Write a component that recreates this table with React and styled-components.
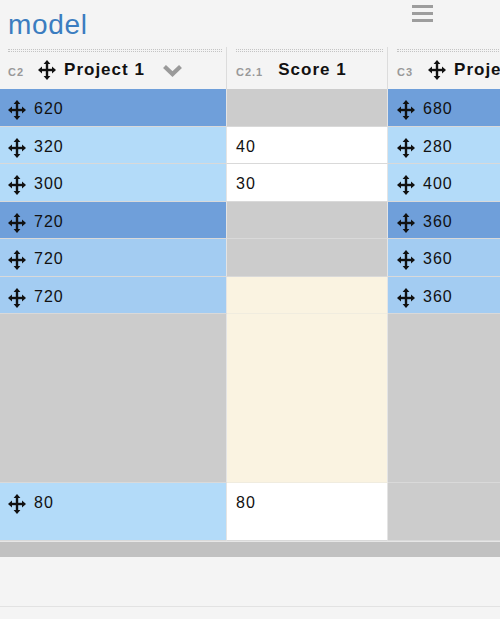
import React from "react";
import styled, { createGlobalStyle } from "styled-components";

const GlobalStyle = createGlobalStyle`
  html, body {
    margin: 0;
    padding: 0;
    background: #f4f4f4;
  }
  body {
    font-family: "Liberation Sans", Arial, sans-serif;
    color: #111;
  }
`;

const Page = styled.div`
  width: 500px;
  height: 619px;
  overflow: hidden;
  display: flex;
  flex-direction: column;
`;

const TitleBar = styled.div`
  height: 47px;
  display: flex;
  align-items: flex-start;
  justify-content: space-between;
`;

const Title = styled.div`
  padding: 7px 0 0 8px;
  font-size: 28px;
  line-height: 36px;
  letter-spacing: 0.7px;
  color: #3b7dc0;
`;

const Burger = styled.div`
  margin: 5px 67px 0 0;
  width: 21px;
  display: flex;
  flex-direction: column;
  gap: 4px;

  span {
    height: 3px;
    background: #9d9d9d;
  }
`;

const Grid = styled.div`
  display: flex;
  flex-direction: column;
  width: 560px;
`;

const Row = styled.div`
  display: flex;
  height: ${(p) => p.h}px;
`;

const widths = [227, 161, 172];

const HeadCell = styled.div`
  width: ${(p) => p.w}px;
  flex: none;
  box-sizing: border-box;
  padding: 2px 4px 0 ${(p) => p.pl}px;
  border-right: 1px solid #dcdcdc;
  display: flex;
  flex-direction: column;
`;

const Grip = styled.div`
  height: 3px;
  border-top: 1px dotted #c4c4c4;
  border-bottom: 1px dotted #c4c4c4;
  box-sizing: border-box;
`;

const HeadLabel = styled.div`
  height: 30px;
  margin-top: 3px;
  display: flex;
  align-items: center;
  white-space: nowrap;
`;

const ColId = styled.span`
  font-size: 11px;
  font-weight: bold;
  letter-spacing: 1px;
  color: #999;
  margin-right: ${(p) => p.gap}px;
  padding-top: 3px;
`;

const ColName = styled.span`
  font-size: 17px;
  font-weight: bold;
  letter-spacing: 1px;
  color: #111;
`;

const MoveSlot = styled.span`
  display: flex;
  margin-right: 8px;
`;

const Chevron = styled.svg`
  margin-left: 17px;
  flex: none;
`;

const tones = {
  dark: "#6f9fda",
  light: "#b3dbf9",
  mid: "#a3ccf2",
  gray: "#cccccc",
  cream: "#faf3e1",
  white: "#ffffff",
};

const Cell = styled.div`
  width: ${(p) => p.w}px;
  flex: none;
  box-sizing: border-box;
  background: ${(p) => tones[p.tone]};
  border-right: 1px solid #e4e4e4;
  border-bottom: 1px solid ${(p) => (p.tone === "cream" ? "#f0ecdf" : "#d9d9d9")};
  padding: 11px 0 0 ${(p) => p.pl}px;
  display: flex;
  align-items: flex-start;
  gap: 8px;
  font-size: 16px;
  line-height: 18px;
  letter-spacing: 1px;
`;

const Scrollbar = styled.div`
  height: 16px;
  box-sizing: border-box;
  border-top: 1px solid #e6e6e6;
  background: #c1c1c1;
`;

const Footer = styled.div`
  height: 49px;
  border-bottom: 1px solid #e2e2e2;
  background: #f4f4f4;
`;

const MoveIcon = () => (
  <svg width="18" height="20" viewBox="0 0 18 20" style={{ flex: "none" }}>
    <rect x="7.8" y="3" width="2.4" height="14" fill="#111" />
    <rect x="3" y="8.8" width="12" height="2.4" fill="#111" />
    <polygon points="9,0 5.6,4 12.4,4" fill="#111" />
    <polygon points="9,20 5.6,16 12.4,16" fill="#111" />
    <polygon points="0,10 4,6.6 4,13.4" fill="#111" />
    <polygon points="18,10 14,6.6 14,13.4" fill="#111" />
  </svg>
);

const pads = [8, 9, 9];

const rows = [
  { h: 38, cells: [["dark", "620", true], ["gray", ""], ["dark", "680", true]] },
  { h: 37, cells: [["light", "320", true], ["white", "40"], ["light", "280", true]] },
  { h: 38, cells: [["light", "300", true], ["white", "30"], ["light", "400", true]] },
  { h: 37, cells: [["dark", "720", true], ["gray", ""], ["dark", "360", true]] },
  { h: 38, cells: [["mid", "720", true], ["gray", ""], ["mid", "360", true]] },
  { h: 37, cells: [["mid", "720", true], ["cream", ""], ["mid", "360", true]] },
  { h: 169, cells: [["gray", ""], ["cream", ""], ["gray", ""]] },
  { h: 58, cells: [["light", "80", true], ["white", "80"], ["gray", ""]] },
];

const headers = [
  { id: "C2", name: "Project 1", move: true, chevron: true, gap: 14 },
  { id: "C2.1", name: "Score 1", gap: 15 },
  { id: "C3", name: "Project 3", move: true, gap: 15 },
];

export default function App() {
  return (
    <Page>
      <GlobalStyle />
      <TitleBar>
        <Title>model</Title>
        <Burger>
          <span />
          <span />
          <span />
        </Burger>
      </TitleBar>
      <Grid>
        <Row h={42}>
          {headers.map((hd, i) => (
            <HeadCell key={hd.id} w={widths[i]} pl={pads[i]}>
              <Grip />
              <HeadLabel>
                <ColId gap={hd.gap}>{hd.id}</ColId>
                {hd.move && (
                  <MoveSlot>
                    <MoveIcon />
                  </MoveSlot>
                )}
                <ColName>{hd.name}</ColName>
                {hd.chevron && (
                  <Chevron width="21" height="13" viewBox="0 0 21 13">
                    <polyline
                      points="2.5,2.5 10.5,10 18.5,2.5"
                      fill="none"
                      stroke="#9a9a9a"
                      strokeWidth="4.2"
                    />
                  </Chevron>
                )}
              </HeadLabel>
            </HeadCell>
          ))}
        </Row>
        {rows.map((r, ri) => (
          <Row key={ri} h={r.h}>
            {r.cells.map(([tone, text, move], ci) => (
              <Cell key={ci} w={widths[ci]} pl={pads[ci]} tone={tone}>
                {move && <MoveIcon />}
                {text && <span>{text}</span>}
              </Cell>
            ))}
          </Row>
        ))}
      </Grid>
      <Scrollbar />
      <Footer />
    </Page>
  );
}
